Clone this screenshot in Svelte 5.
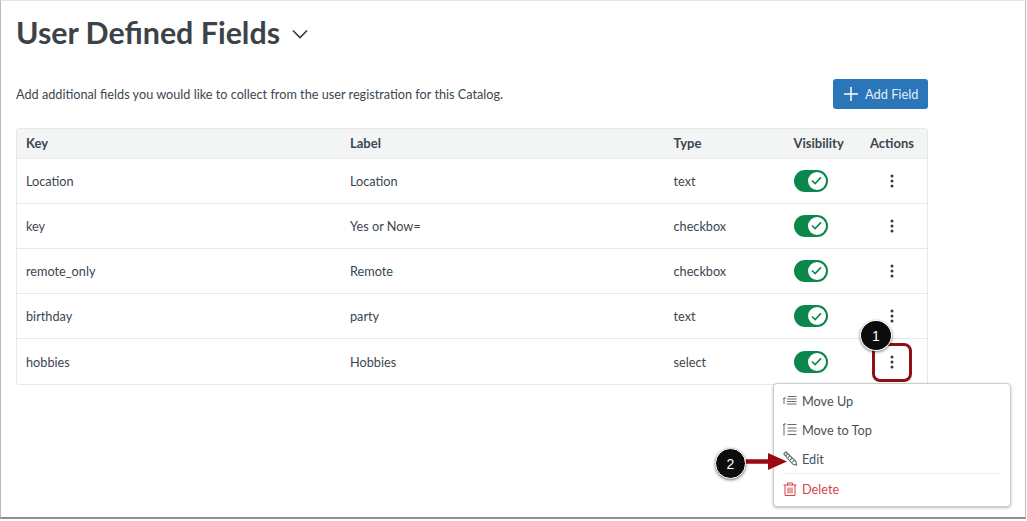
<script lang="ts">
	const rows = [
		{key: 'Location', label: 'Location', type: 'text'},
		{key: 'key', label: 'Yes or Now=', type: 'checkbox'},
		{key: 'remote_only', label: 'Remote', type: 'checkbox'},
		{key: 'birthday', label: 'party', type: 'text'},
		{key: 'hobbies', label: 'Hobbies', type: 'select'}
	];
</script>

<div class="frame">
	<div class="title_row">
		<h1>User Defined Fields</h1>
		<svg class="caret" width="16" height="10" viewBox="0 0 16 10"><path d="M1 1.5 L8 8.5 L15 1.5" fill="none" stroke="#2d3b45" stroke-width="1.6" /></svg>
	</div>

	<div class="intro_row">
		<p>Add additional fields you would like to collect from the user registration for this Catalog.</p>
		<button class="add_btn">
			<svg width="14" height="14" viewBox="0 0 14 14"><path d="M7 0 V14 M0 7 H14" stroke="#fff" stroke-width="1.5" /></svg>
			Add Field
		</button>
	</div>

	<div class="table">
		<div class="row head">
			<div>Key</div>
			<div>Label</div>
			<div>Type</div>
			<div>Visibility</div>
			<div>Actions</div>
		</div>
		{#each rows as row}
			<div class="row">
				<div>{row.key}</div>
				<div>{row.label}</div>
				<div>{row.type}</div>
				<div>
					<span class="toggle">
						<span class="knob">
							<svg width="11" height="9" viewBox="0 0 12 10"><path d="M1 5 L4.5 8.5 L11 1.5" fill="none" stroke="#0b874b" stroke-width="1.8" /></svg>
						</span>
					</span>
				</div>
				<div class="dots_cell">
					<svg width="4" height="14" viewBox="0 0 4 14"><circle cx="2" cy="2" r="1.5" fill="#2d3b45" /><circle cx="2" cy="7" r="1.5" fill="#2d3b45" /><circle cx="2" cy="12" r="1.5" fill="#2d3b45" /></svg>
				</div>
			</div>
		{/each}
	</div>

	<div class="red_box"></div>
	<div class="callout one">1</div>

	<div class="menu">
		<div class="menu_item">
			<svg width="14" height="12" viewBox="0 0 14 12"><path d="M5 1.5 H13.5 M4 4 H13.5 M4 6.5 H13.5 M4 9 H13.5 M1 9 V3 M0 4.2 L1 3 L3 3" fill="none" stroke="#5f6a73" stroke-width="1" /></svg>
			Move Up
		</div>
		<div class="menu_item">
			<svg width="14" height="14" viewBox="0 0 14 14"><path d="M4.5 1.5 H13.5 M4.5 5 H13.5 M4.5 8 H13.5 M4.5 11.5 H13.5 M1 12.5 V1 M0 2.5 L1 1 L3 1" fill="none" stroke="#5f6a73" stroke-width="1" /></svg>
			Move to Top
		</div>
		<div class="menu_item">
			<svg width="14" height="15" viewBox="0 0 14 15"><path d="M0.8 3 L3 0.8 L13 10.5 L13.5 14 L10 13.3 Z M2.8 4.5 L4.6 2.6 M5 6.7 L6.8 4.8 M7.2 8.9 L9 7 M9.4 11.1 L11.2 9.2" fill="none" stroke="#5f6a73" stroke-width="1.1" /></svg>
			Edit
		</div>
		<div class="menu_sep"></div>
		<div class="menu_item danger">
			<svg width="14" height="14" viewBox="0 0 14 14"><path d="M0.5 3 H13.5 M4.5 3 V1 H9.5 V3 M2 3 V13.5 H12 V3 M5 5.5 V11.5 M7 5.5 V11.5 M9 5.5 V11.5" fill="none" stroke="#d9414c" stroke-width="1" /></svg>
			Delete
		</div>
	</div>

	<svg class="arrow" width="41" height="17" viewBox="0 0 41 17"><path d="M0 6.3 H22 V0 L41 8.5 L22 17 V10.7 H0 Z" fill="#9b0a12" /></svg>
	<div class="callout two">2</div>
</div>

<style>
	:global(body) {
		background: #fff;
	}

	.frame {
		position: relative;
		box-sizing: border-box;
		width: 1026px;
		height: 519px;
		padding: 12px 16px 0 15px;
		border-left: 1px solid #b9b9b9;
		border-right: 1px solid #b9b9b9;
		border-bottom: 2px solid #8f8f8f;
		border-top: 1px solid #e4e4e4;
		font-family: Lato, sans-serif;
		color: #3b4650;
		font-size: 12.7px;
		background: #fff;
		overflow: hidden;
	}

	.title_row {
		display: flex;
		align-items: center;
		gap: 12px;
		height: 38px;
	}

	h1 {
		margin: 0;
		font-size: 30.4px;
		font-weight: 700;
		line-height: 38px;
		color: #3b4349;
	}

	.caret {
		margin-top: 4px;
	}

	.intro_row {
		display: flex;
		align-items: center;
		justify-content: space-between;
		width: 912px;
		margin-top: 28px;
		height: 30px;
	}

	p {
		margin: 0;
	}

	.add_btn {
		display: flex;
		align-items: center;
		gap: 7px;
		box-sizing: border-box;
		width: 95px;
		height: 30px;
		padding: 0 0 0 11px;
		border: none;
		border-radius: 3px;
		background: #2a76b8;
		color: #e6eff7;
		font-family: inherit;
		font-size: 12.8px;
	}

	.table {
		width: 912px;
		margin-top: 19px;
		box-sizing: border-box;
		border: 1px solid #e6e9ea;
		border-radius: 3px;
	}

	.row {
		display: grid;
		grid-template-columns: 324px 323.5px 120px 76.5px 1fr;
		align-items: center;
		height: 45.2px;
		padding-left: 9px;
		box-sizing: border-box;
		border-bottom: 1px solid #e6e9ea;
	}

	.row:last-child {
		border-bottom: none;
	}

	.head {
		height: 29.5px;
		background: #f3f4f4;
		font-size: 13px;
		font-weight: 700;
	}

	.toggle {
		display: flex;
		align-items: center;
		justify-content: flex-end;
		box-sizing: border-box;
		width: 34px;
		height: 22px;
		padding-right: 2px;
		border-radius: 11px;
		background: #0b874b;
	}

	.knob {
		display: flex;
		align-items: center;
		justify-content: center;
		width: 18px;
		height: 18px;
		border-radius: 50%;
		background: #fff;
	}

	.dots_cell {
		display: flex;
		padding-left: 20px;
	}

	.red_box {
		position: absolute;
		left: 871px;
		top: 342px;
		width: 40px;
		height: 39px;
		box-sizing: border-box;
		border: 3.5px solid #8f0f14;
		border-radius: 8px;
	}

	.callout {
		position: absolute;
		display: flex;
		align-items: center;
		justify-content: center;
		height: 31px;
		border-radius: 50%;
		background: #0c0c0c;
		border: 1px solid #fff;
		box-sizing: border-box;
		box-shadow: 0 1px 3px rgba(0, 0, 0, 0.55);
		color: #fff;
		font-family: 'Liberation Sans', sans-serif;
		font-size: 14px;
	}

	.one {
		left: 859px;
		top: 319px;
		width: 32px;
	}

	.two {
		left: 714px;
		top: 447px;
		width: 31px;
	}

	.arrow {
		position: absolute;
		left: 745px;
		top: 452px;
	}

	.menu {
		position: absolute;
		left: 772px;
		top: 382px;
		box-sizing: border-box;
		width: 238px;
		height: 124px;
		padding: 2px 10px 0 9px;
		background: #fff;
		border: 1px solid #c7cdd1;
		border-radius: 4px;
		box-shadow: 0 1px 3px rgba(0, 0, 0, 0.25);
		color: #46525c;
	}

	.menu_item {
		display: flex;
		align-items: center;
		gap: 5px;
		height: 29px;
	}

	.menu_item svg {
		flex: none;
	}

	.menu_sep {
		height: 1px;
		background: #eceeef;
	}

	.danger {
		color: #d9414c;
	}
</style>
